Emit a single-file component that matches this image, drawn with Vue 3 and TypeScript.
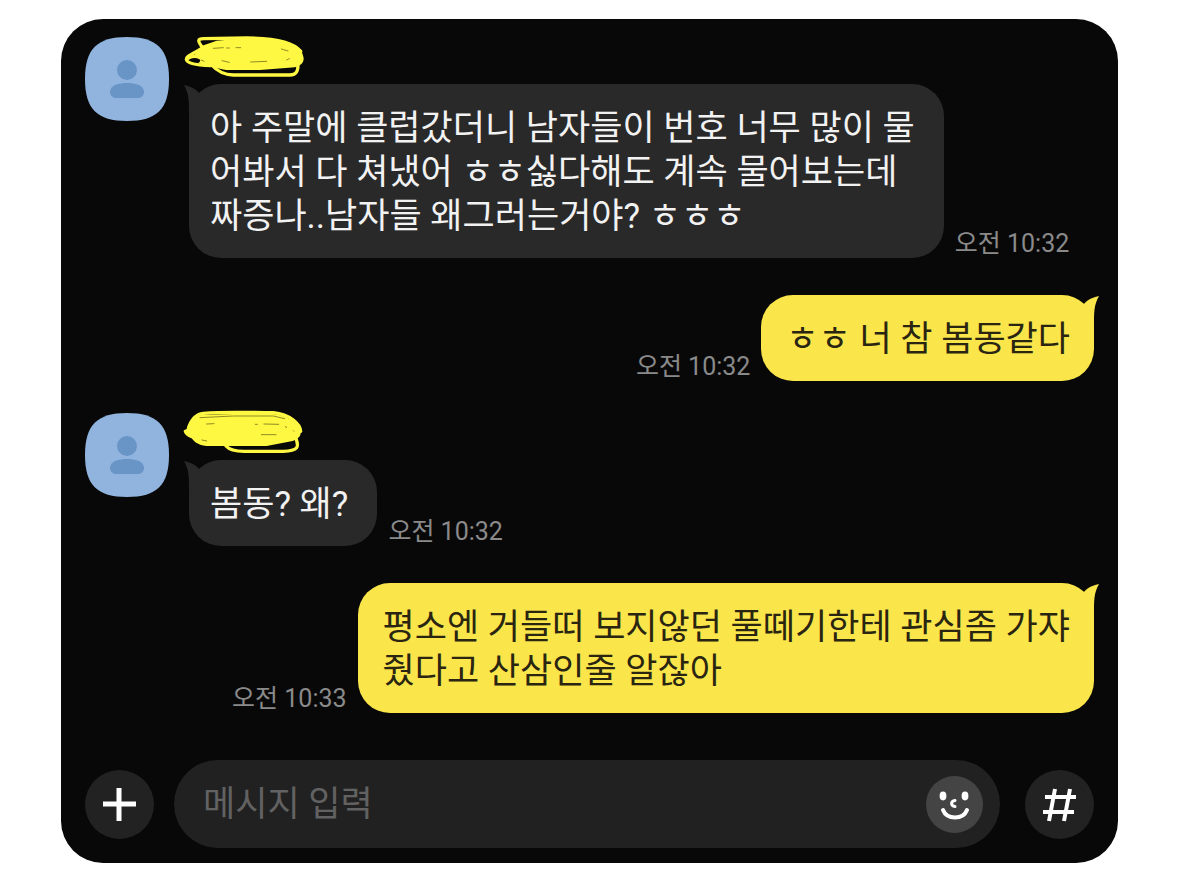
<script setup lang="ts">
import { ref } from 'vue'

interface Scribble {
  viewBox: string
  body: string
  strokes: string[]
  gaps: string[]
}

interface Message {
  id: number
  mine: boolean
  text: string
  time: string
  scribble?: Scribble
}

const draft = ref('')

const messages: Message[] = [
  {
    id: 1,
    mine: false,
    text: '아 주말에 클럽갔더니 남자들이 번호 너무 많이 물\n어봐서 다 쳐냈어 ㅎㅎ싫다해도 계속 물어보는데\n짜증나..남자들 왜그러는거야? ㅎㅎㅎ',
    time: '오전 10:32',
    scribble: {
      viewBox: '387 81 360 141',
      body: 'M424 108L470 92 560 84C620 84 660 92 690 100C716 108 728 124 731 145C731 160 722 166 705 172L600 180 500 180C470 176 456 170 446 166L412 160C428 154 420 140 404 134Z',
      strokes: [
        'M424 108C412 92 414 86 430 86L560 84C640 84 700 96 722 124',
        'M424 116C400 132 378 138 379 148C381 160 410 166 452 167',
        'M382 146C400 134 420 138 440 158',
        'M455 165C470 182 490 194 520 195L690 195C710 195 714 182 714 164',
      ],
      gaps: ['M460 115L490 113', 'M500 114L508 114', 'M528 113L542 113', 'M486 152L508 157', 'M572 156L620 154', 'M664 117L684 123', 'M680 150L688 146', 'M424 150L432 154'],
    },
  },
  { id: 2, mine: true, text: 'ㅎㅎ 너 참 봄동같다', time: '오전 10:32' },
  {
    id: 3,
    mine: false,
    text: '봄동? 왜?',
    time: '오전 10:32',
    scribble: {
      viewBox: '387 39 360 141',
      body: 'M376 94C378 84 386 80 390 74C396 56 408 46 430 44L520 42 640 42C690 48 720 74 722 98C722 110 712 118 694 124L620 138 440 138C410 134 398 122 394 110Z',
      strokes: [
        'M386 82C396 54 410 42 430 40C500 34 570 38 640 38C690 44 720 70 722 94',
        'M376 94C380 106 390 108 400 112',
        'M498 138C510 152 530 155 560 154L670 154C714 152 718 142 708 116',
      ],
      gaps: ['M440 72L462 71', 'M586 73L592 73', 'M612 72L656 73', 'M604 104L648 104', 'M426 120L440 123', 'M676 80L680 82', 'M700 92L702 94', 'M420 53L520 48 640 48 674 56'],
    },
  },
  {
    id: 4,
    mine: true,
    text: '평소엔 거들떠 보지않던 풀떼기한테 관심좀 가쟈\n줬다고 산삼인줄 알잖아',
    time: '오전 10:33',
  },
]
</script>

<template>
  <main class="chat">
    <ol class="messages">
      <li v-for="m in messages" :key="m.id" class="message" :class="m.mine ? 'mine' : 'theirs'">
        <svg v-if="!m.mine" class="avatar" viewBox="0 0 84 84" aria-hidden="true">
          <path class="avatar-bg" d="M42 0C72 0 84 12 84 42S72 84 42 84 0 72 0 42 12 0 42 0Z" />
          <circle class="avatar-fg" cx="42" cy="33" r="10" />
          <path class="avatar-fg" d="M25 54C26 48 34 46 42 46S58 48 59 54C59 58 57 61 53 61H31C27 61 25 58 25 54Z" />
        </svg>
        <div class="content">
          <svg v-if="m.scribble" class="scribble" :viewBox="m.scribble.viewBox" aria-hidden="true">
            <path class="scribble-body" :d="m.scribble.body" />
            <path v-for="d in m.scribble.strokes" :key="d" class="scribble-stroke" :d="d" />
            <path v-for="d in m.scribble.gaps" :key="d" class="scribble-gap" :d="d" />
          </svg>
          <div class="line">
            <div class="bubble">
              <svg class="tail" viewBox="-6 0 38 32" aria-hidden="true">
                <path d="M-5 1C0 2 6 4 10 9L20 20 0 32C0 16 0 10 -5 1Z" />
              </svg>
              <p class="text">{{ m.text }}</p>
            </div>
            <time class="time">{{ m.time }}</time>
          </div>
        </div>
      </li>
    </ol>

    <form class="composer" @submit.prevent>
      <button class="round" type="button" aria-label="추가">
        <svg viewBox="0 0 69 69" aria-hidden="true">
          <path class="plus" d="M34 18V51M18 34H51" />
        </svg>
      </button>
      <div class="field">
        <input v-model="draft" class="input" type="text" placeholder="메시지 입력" aria-label="메시지 입력" />
        <button class="emoji" type="button" aria-label="이모티콘">
          <svg viewBox="0 0 57 57" aria-hidden="true">
            <ellipse class="eye" cx="17" cy="20" rx="3.4" ry="4.4" />
            <ellipse class="eye" cx="39" cy="20" rx="3.4" ry="4.4" />
            <path class="nose" d="M29 24.500C24.500 25 24.500 30 29 30.500" />
            <path class="smile" d="M17 34C21 44 37 44 41 34" />
          </svg>
        </button>
      </div>
      <button class="round" type="button" aria-label="샵 검색">
        <svg viewBox="0 0 69 69" aria-hidden="true">
          <path class="hash" d="M30 19L24 51M45 19L39 51M20 27H51M18 42H49" />
        </svg>
      </button>
    </form>
  </main>
</template>

<style>
body {
  background: #fff;
}
</style>

<style scoped>
.chat {
  box-sizing: border-box;
  margin: 19px 61px;
  padding: 18px 24px 15px;
  border-radius: 42px;
  background: #080808;
  font-family: Roboto, "Noto Sans CJK KR", sans-serif;
}

.messages {
  display: flex;
  flex-direction: column;
  gap: 37px;
  margin: 0;
  padding: 0;
  list-style: none;
}

.message {
  display: flex;
  gap: 20px;
}

.mine {
  justify-content: flex-end;
}

.mine + .theirs {
  margin-top: -5px;
}

.avatar {
  flex: none;
  width: 84px;
  height: 84px;
}

.avatar-bg {
  fill: #91b4de;
}

.avatar-fg {
  fill: #6894c6;
}

.scribble {
  display: block;
  width: 120px;
  height: 47px;
  overflow: visible;
}

.scribble-body {
  fill: #fef843;
}

.scribble-stroke {
  fill: none;
  stroke: #fef843;
  stroke-width: 10;
  stroke-linecap: round;
}

.scribble-gap {
  fill: none;
  stroke: #8f8b22;
  stroke-width: 3;
  stroke-linecap: round;
}

.line {
  display: flex;
  align-items: flex-end;
  gap: 11px;
}

.mine .line {
  flex-direction: row-reverse;
}

.bubble {
  position: relative;
  padding: 23px 29px 19px 21px;
  border-radius: 32px;
  background: #292929;
  color: #f2f2f2;
}

.mine .bubble {
  padding: 23px 24px 19px 25px;
  background: #fae54b;
  color: #2a2510;
}

.tail {
  position: absolute;
  top: 0;
  left: -6px;
  width: 38px;
  height: 32px;
  fill: #292929;
}

.mine .tail {
  right: -6px;
  left: auto;
  transform: scaleX(-1);
  fill: #fae54b;
}

.text {
  position: relative;
  margin: 0;
  font-size: 35px;
  line-height: 44px;
  white-space: pre-line;
}

.time {
  flex: none;
  color: #8a8a8a;
  font-size: 25px;
  line-height: 28px;
}

.composer {
  display: flex;
  align-items: center;
  gap: 20px;
  margin-top: 47px;
}

.round,
.emoji {
  flex: none;
  padding: 0;
  border: 0;
  border-radius: 50%;
  background: #222;
}

.round {
  width: 69px;
  height: 69px;
}

.round:last-child {
  margin-left: 5px;
}

.round svg,
.emoji svg {
  display: block;
  width: 100%;
  height: 100%;
  fill: none;
  stroke: #fff;
}

.field {
  display: flex;
  flex: 1;
  align-items: center;
  box-sizing: border-box;
  height: 88px;
  padding: 0 17px 0 29px;
  border-radius: 44px;
  background: #212121;
}

.input {
  flex: 1;
  min-width: 0;
  padding: 2px 0 0;
  border: 0;
  outline: 0;
  background: transparent;
  color: #f2f2f2;
  font-family: inherit;
  font-size: 35px;
  line-height: 44px;
}

.input::placeholder {
  color: #626262;
  opacity: 1;
}

.emoji {
  width: 57px;
  height: 57px;
  background: #444;
}

.plus {
  stroke-width: 5;
}

.hash {
  stroke-width: 4;
}

.emoji .eye {
  fill: #fff;
  stroke: none;
}

.nose {
  stroke-width: 3;
  stroke-linecap: round;
}

.smile {
  stroke-width: 4;
  stroke-linecap: round;
}
</style>
